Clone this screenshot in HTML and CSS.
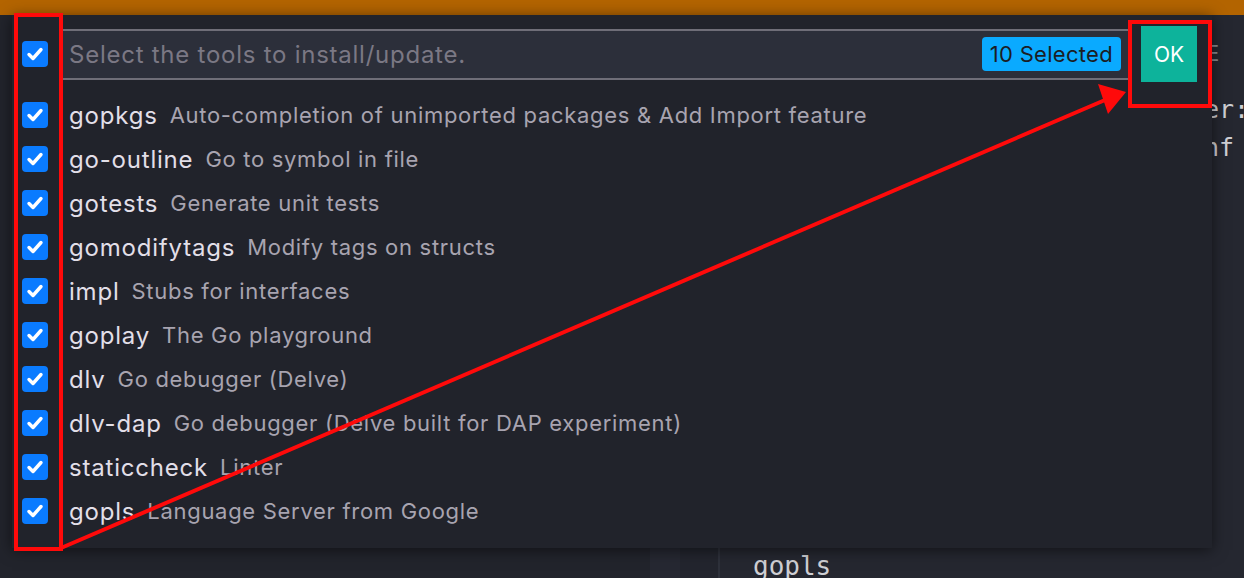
FILE: index.html
```html
<!DOCTYPE html>
<html>
<head>
<meta charset="utf-8">
<link rel="stylesheet" href="styles.css">
</head>
<body>
<div class="titlebar"></div>
<div class="editor">
  <div class="col col-a"></div>
  <div class="col col-b"></div>
  <div class="col col-c"></div>
  <div class="code">
    <div class="code-line l1">E</div>
    <div class="code-line l2">er:</div>
    <div class="code-line l3">nf</div>
    <div class="code-line l4">gopls</div>
  </div>
</div>

<div class="quickpick">
  <div class="qp-head">
    <span class="cb"><svg viewBox="0 0 26 26"><path d="M7 13.5l4 4 8-9" fill="none" stroke="#fff" stroke-width="3.4" stroke-linecap="round" stroke-linejoin="round"/></svg></span>
    <div class="qp-input">
      <span class="placeholder">Select the tools to install/update.</span>
      <span class="badge">10 Selected</span>
    </div>
    <button class="ok">OK</button>
  </div>
  <ul class="qp-list">
    <li><span class="cb"><svg viewBox="0 0 26 26"><path d="M7 13.5l4 4 8-9" fill="none" stroke="#fff" stroke-width="3.4" stroke-linecap="round" stroke-linejoin="round"/></svg></span><span class="name">gopkgs</span><span class="desc">Auto-completion of unimported packages &amp; Add Import feature</span></li>
    <li><span class="cb"><svg viewBox="0 0 26 26"><path d="M7 13.5l4 4 8-9" fill="none" stroke="#fff" stroke-width="3.4" stroke-linecap="round" stroke-linejoin="round"/></svg></span><span class="name">go-outline</span><span class="desc">Go to symbol in file</span></li>
    <li><span class="cb"><svg viewBox="0 0 26 26"><path d="M7 13.5l4 4 8-9" fill="none" stroke="#fff" stroke-width="3.4" stroke-linecap="round" stroke-linejoin="round"/></svg></span><span class="name">gotests</span><span class="desc">Generate unit tests</span></li>
    <li><span class="cb"><svg viewBox="0 0 26 26"><path d="M7 13.5l4 4 8-9" fill="none" stroke="#fff" stroke-width="3.4" stroke-linecap="round" stroke-linejoin="round"/></svg></span><span class="name">gomodifytags</span><span class="desc">Modify tags on structs</span></li>
    <li><span class="cb"><svg viewBox="0 0 26 26"><path d="M7 13.5l4 4 8-9" fill="none" stroke="#fff" stroke-width="3.4" stroke-linecap="round" stroke-linejoin="round"/></svg></span><span class="name">impl</span><span class="desc">Stubs for interfaces</span></li>
    <li><span class="cb"><svg viewBox="0 0 26 26"><path d="M7 13.5l4 4 8-9" fill="none" stroke="#fff" stroke-width="3.4" stroke-linecap="round" stroke-linejoin="round"/></svg></span><span class="name">goplay</span><span class="desc">The Go playground</span></li>
    <li><span class="cb"><svg viewBox="0 0 26 26"><path d="M7 13.5l4 4 8-9" fill="none" stroke="#fff" stroke-width="3.4" stroke-linecap="round" stroke-linejoin="round"/></svg></span><span class="name">dlv</span><span class="desc">Go debugger (Delve)</span></li>
    <li><span class="cb"><svg viewBox="0 0 26 26"><path d="M7 13.5l4 4 8-9" fill="none" stroke="#fff" stroke-width="3.4" stroke-linecap="round" stroke-linejoin="round"/></svg></span><span class="name">dlv-dap</span><span class="desc">Go debugger (Delve built for DAP experiment)</span></li>
    <li><span class="cb"><svg viewBox="0 0 26 26"><path d="M7 13.5l4 4 8-9" fill="none" stroke="#fff" stroke-width="3.4" stroke-linecap="round" stroke-linejoin="round"/></svg></span><span class="name">staticcheck</span><span class="desc">Linter</span></li>
    <li><span class="cb"><svg viewBox="0 0 26 26"><path d="M7 13.5l4 4 8-9" fill="none" stroke="#fff" stroke-width="3.4" stroke-linecap="round" stroke-linejoin="round"/></svg></span><span class="name">gopls</span><span class="desc">Language Server from Google</span></li>
  </ul>
</div>

<svg class="annot" width="1244" height="578" viewBox="0 0 1244 578">
  <rect x="16" y="15" width="45" height="534" fill="none" stroke="#ff0a0a" stroke-width="4"/>
  <rect x="1130" y="22" width="80" height="84" fill="none" stroke="#ff0a0a" stroke-width="4"/>
  <line x1="61" y1="548" x2="1105" y2="100" stroke="#ff0a0a" stroke-width="4"/>
  <polygon points="1126,92 1098,84 1108,114" fill="#ff0a0a"/>
</svg>
</body>
</html>
```
FILE: styles.css
```css
* { box-sizing: border-box; }
html, body {
  margin: 0;
  padding: 0;
  width: 1244px;
  height: 578px;
  overflow: hidden;
  background: #23252e;
  font-family: "Inter", "Noto Sans", sans-serif;
  position: relative;
}
.titlebar {
  height: 15px;
  background: #b36400;
}
.editor {
  display: flex;
  height: 563px;
  background: #22242c;
  position: relative;
}
.col { height: 100%; }
.col-a { width: 650px; background: #22242c; }
.col-b { width: 30px; background: #262832; }
.col-c { width: 40px; background: #23252e; border-right: 2px solid #2e313b; }
.code {
  flex: 1;
  position: relative;
  background: #252730;
  font-family: "DejaVu Sans Mono", monospace;
  font-size: 25px;
  color: #cfcfd4;
}
.code-line { position: absolute; white-space: pre; }
.l1 { left: 486px; top: 26px; color: #8a8c94; font-size: 22px; }
.l2 { left: 484px; top: 80px; }
.l3 { left: 484px; top: 118px; }
.l4 { left: 33px; top: 536px; font-size: 26px; }

.quickpick {
  position: absolute;
  left: 12px;
  top: 15px;
  width: 1200px;
  height: 533px;
  background: #21232b;
  box-shadow: 0 2px 14px rgba(0,0,0,0.55);
}
.qp-head {
  display: flex;
  align-items: center;
  height: 78px;
  padding: 0 0 0 10px;
}
.cb {
  width: 26px;
  height: 26px;
  flex: none;
  background: #0a7bff;
  border-radius: 4px;
  display: flex;
}
.cb svg { width: 26px; height: 26px; }
.qp-input {
  margin-left: 11px;
  width: 1070px;
  height: 51px;
  background: #2c2f3a;
  border-top: 2px solid #6f6e78;
  border-bottom: 2px solid #6f6e78;
  border-left: 2px solid #5a5a64;
  display: flex;
  align-items: center;
  padding-left: 8px;
  padding-right: 8px;
}
.placeholder {
  flex: 1;
  font-size: 24px;
  letter-spacing: 0.75px;
  color: #7b7884;
}
.badge {
  background: #0aaaff;
  color: #1b1d24;
  font-size: 22px;
  letter-spacing: 0.3px;
  border-radius: 4px;
  padding: 4px 8px 4px 8px;
  line-height: 26px;
}
.ok {
  margin-left: 12px;
  width: 56px;
  height: 56px;
  border: none;
  background: #0db39b;
  color: #ffffff;
  font-family: inherit;
  font-size: 21px;
  padding: 0;
}
.qp-list {
  list-style: none;
  margin: 0;
  padding: 0 0 0 10px;
}
.qp-list li {
  display: flex;
  align-items: center;
  height: 44px;
}
.name {
  margin-left: 21px;
  font-size: 24px;
  letter-spacing: 0.8px;
  color: #e2dfe8;
}
.desc {
  margin-left: 12px;
  font-size: 22px;
  letter-spacing: 0.7px;
  color: #a8a4b0;
}
.annot {
  position: absolute;
  left: 0;
  top: 0;
  pointer-events: none;
}
```
